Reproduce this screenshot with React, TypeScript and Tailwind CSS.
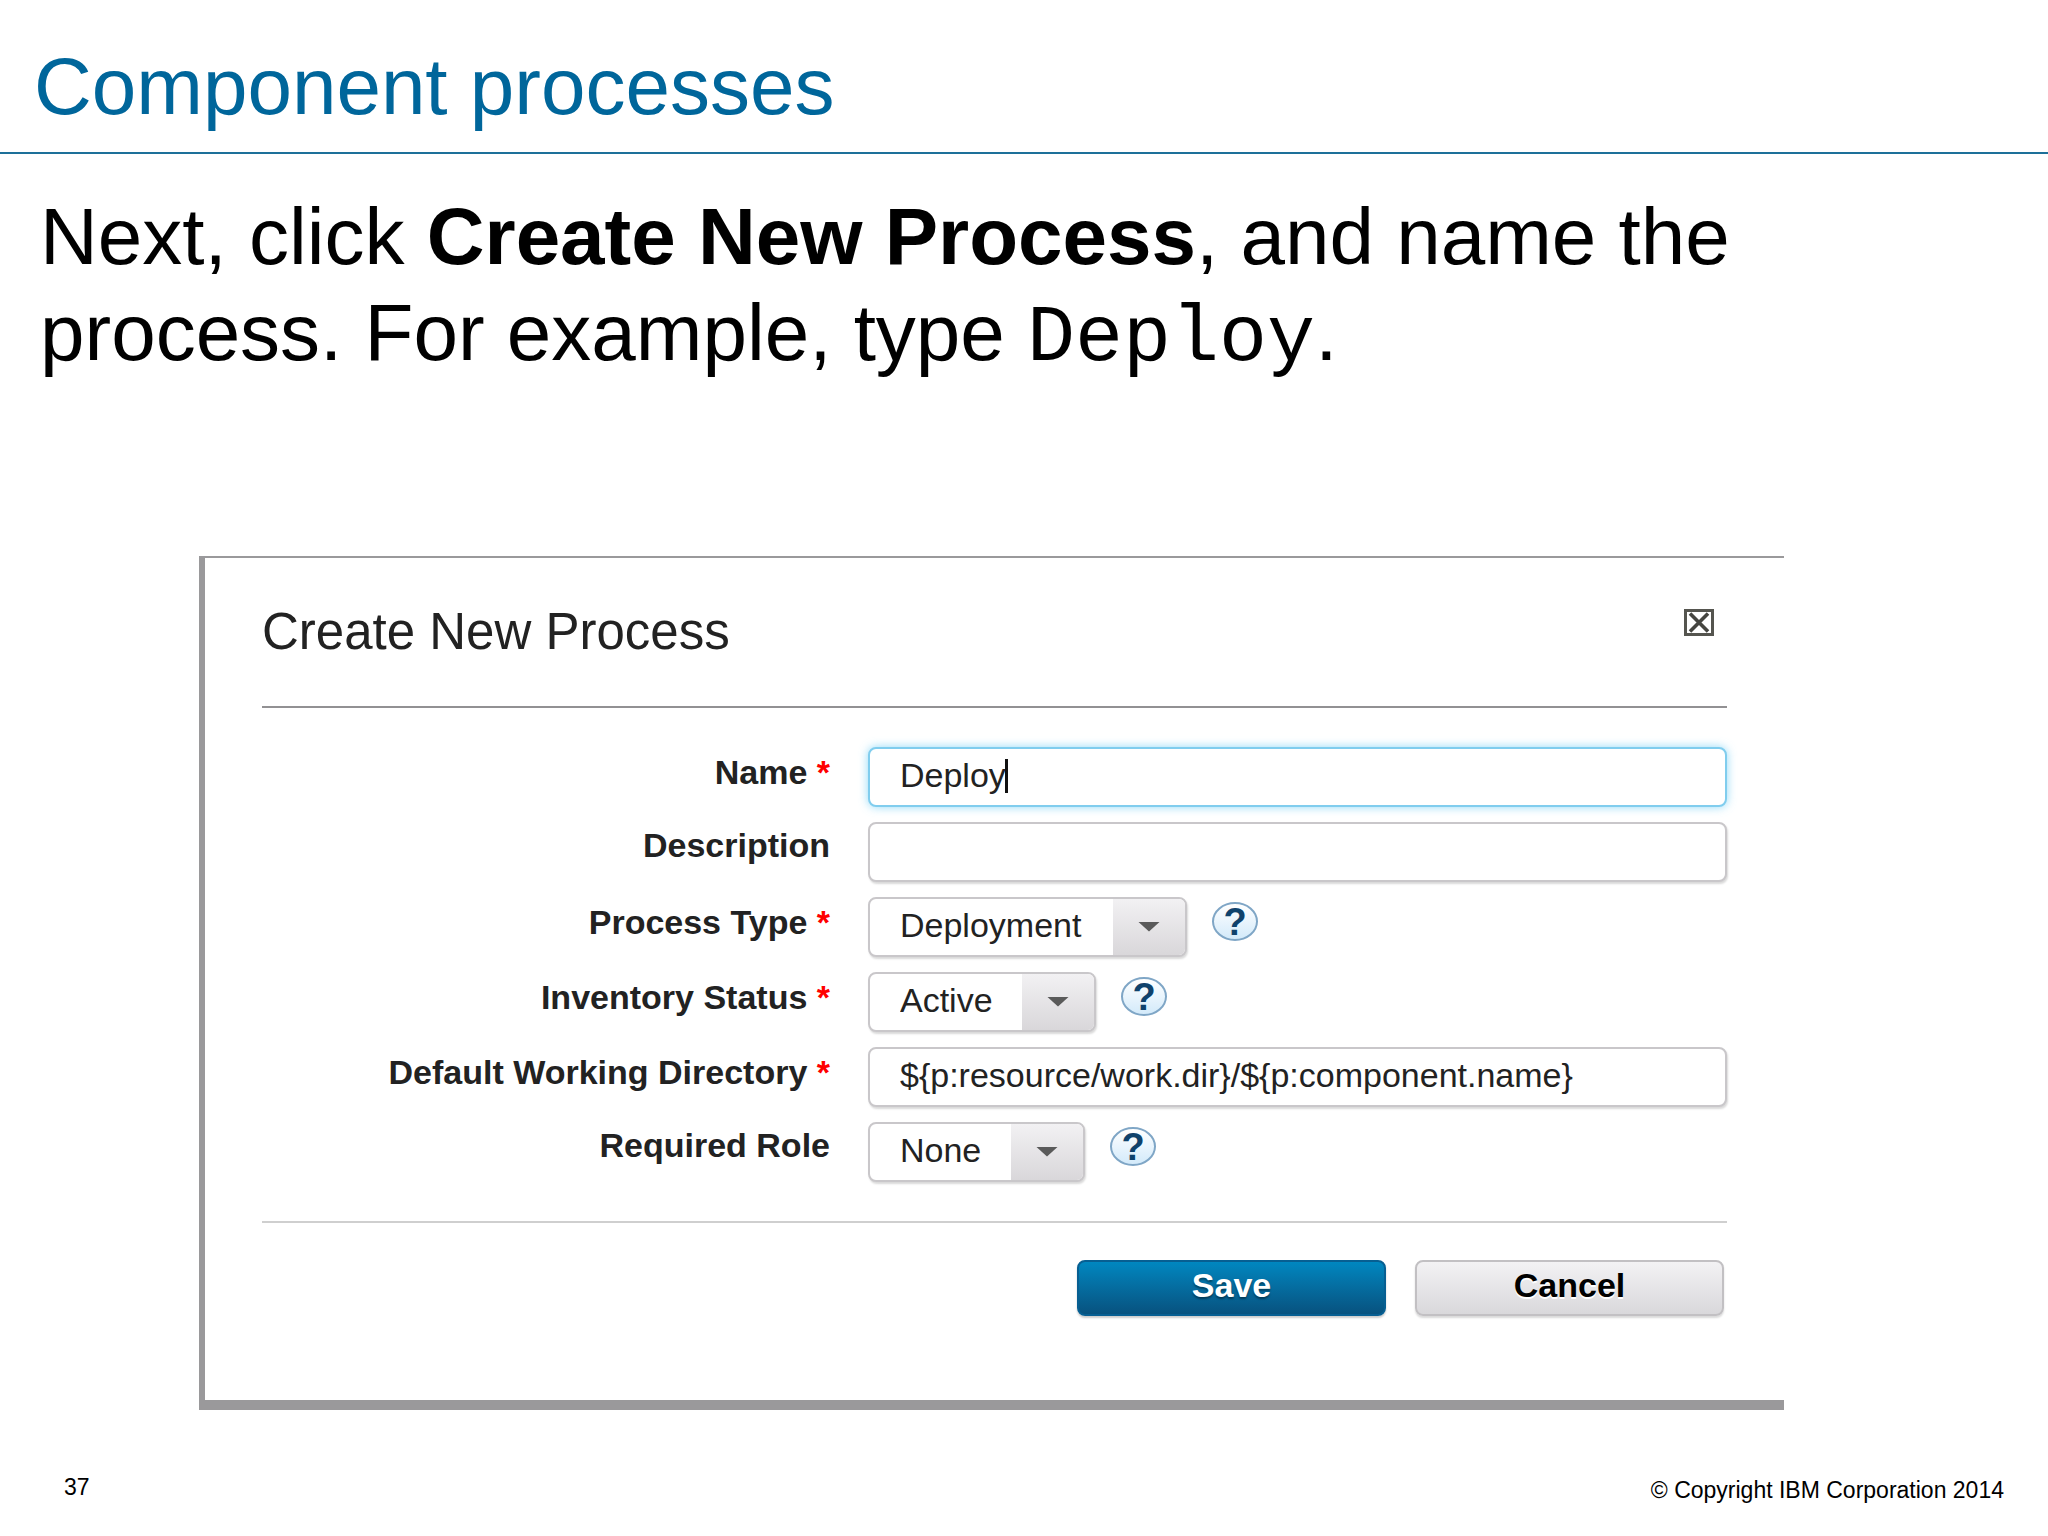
import { useState } from "react";
import type { ReactNode } from "react";

const fieldBase =
  "h-[60px] rounded-lg border-2 bg-white pb-1 pl-[30px] text-[34px] text-[#222] outline-none";
const fieldIdle =
  "border-[#c9c7ca] shadow-[1px_2px_2px_rgba(0,0,0,0.15)]";

function Row({
  id,
  label,
  required,
  children,
}: {
  id: string;
  label: string;
  required?: boolean;
  children: ReactNode;
}) {
  return (
    <div className="flex items-start gap-[38px]">
      <label
        htmlFor={id}
        className={`w-[568px] shrink-0 text-right text-[34px] font-bold whitespace-nowrap text-[#222] ${
          required ? "leading-[50px]" : "leading-[46px]"
        }`}
      >
        {label}
        {required && <span className="text-[#f00]"> *</span>}
      </label>
      {children}
    </div>
  );
}

function Dropdown({
  id,
  options,
  width,
}: {
  id: string;
  options: string[];
  width: string;
}) {
  return (
    <div className="flex items-start gap-[25px]">
      <div className={`relative ${width}`}>
        <select
          id={id}
          className={`${fieldBase} ${fieldIdle} w-full appearance-none pr-[72px]`}
        >
          {options.map((o) => (
            <option key={o}>{o}</option>
          ))}
        </select>
        <span className="pointer-events-none absolute inset-y-0.5 right-0.5 flex w-[72px] items-center justify-center rounded-r-md bg-linear-to-b from-[#f2f1f3] to-[#d9d7da]">
          <svg width="22" height="10" viewBox="0 0 22 10" aria-hidden="true">
            <path d="M0.5 0H21.5L11 9.5Z" fill="#5a5a5a" />
          </svg>
        </span>
      </div>
      <button
        type="button"
        aria-label="Help"
        className="mt-[5px] flex h-[39px] w-[46px] items-center justify-center rounded-[50%] border-2 border-[#7fa6c6] bg-linear-to-b from-white to-[#d3eafa] text-[38px] leading-[36px] font-bold text-[#0f426c]"
      >
        ?
      </button>
    </div>
  );
}

export default function App() {
  const [name, setName] = useState("Deploy");
  return (
    <div className="flex min-h-screen flex-col bg-white font-['Liberation_Sans',Arial,sans-serif] text-black">
      <header className="border-b-2 border-[#1d7099] px-[34px] pt-[39px] pb-[17px]">
        <h1 className="text-[80px] leading-[96px] text-[#00669b]">
          Component processes
        </h1>
      </header>

      <main>
        <p className="px-10 pt-[35px] text-[80px] leading-[96px]">
          Next, click <strong>Create New Process</strong>, and name the process.
          For example, type{" "}
          <code className="font-['Liberation_Mono',monospace] leading-none">
            Deploy
          </code>
          .
        </p>

        <section className="mt-[175px] mr-[264px] ml-[199px] border-t-2 border-b-10 border-l-6 border-[#9a999b] pt-[43px] pr-[57px] pb-[84px] pl-[57px]">
          <div className="flex items-start justify-between border-b-2 border-[#929193] pb-[43px]">
            <h2 className="text-[51px] leading-[62px] text-[#222]">
              Create New Process
            </h2>
            <button type="button" aria-label="Close" className="mt-2 mr-[13px]">
              <svg width="30" height="27" viewBox="0 0 30 27" aria-hidden="true">
                <rect x="1.5" y="1.5" width="27" height="24" fill="#fff" stroke="#55554f" strokeWidth="3" />
                <path d="M6 4.5L24 22.5M24 4.5L6 22.5" stroke="#454540" strokeWidth="3.6" />
              </svg>
            </button>
          </div>

          <form onSubmit={(e) => e.preventDefault()}>
            <div className="flex flex-col gap-[15px] pt-[39px] pb-[39px]">
              <Row id="name" label="Name" required>
                <div className="relative flex-1">
                  <input
                    id="name"
                    value={name}
                    onChange={(e) => setName(e.target.value)}
                    className={`${fieldBase} w-full border-[#80cdee] caret-transparent shadow-[0_0_10px_rgba(110,205,245,0.75)]`}
                  />
                  <span className="pointer-events-none absolute top-3 left-[137px] h-[34px] w-[3px] bg-[#111]" />
                </div>
              </Row>
              <Row id="description" label="Description">
                <input id="description" className={`${fieldBase} ${fieldIdle} min-w-0 flex-1`} />
              </Row>
              <Row id="type" label="Process Type" required>
                <Dropdown id="type" width="w-[319px]" options={["Deployment"]} />
              </Row>
              <Row id="status" label="Inventory Status" required>
                <Dropdown id="status" width="w-[228px]" options={["Active"]} />
              </Row>
              <Row id="directory" label="Default Working Directory" required>
                <input
                  id="directory"
                  defaultValue="${p:resource/work.dir}/${p:component.name}"
                  className={`${fieldBase} ${fieldIdle} min-w-0 flex-1`}
                />
              </Row>
              <Row id="role" label="Required Role">
                <Dropdown id="role" width="w-[217px]" options={["None"]} />
              </Row>
            </div>

            <div className="flex justify-end gap-[29px] border-t-2 border-[#cfcfcf] pt-[37px] pr-[3px]">
              <button
                type="submit"
                className="h-14 w-[309px] rounded-lg border-2 border-[#075f92] bg-linear-to-b from-[#0087c0] to-[#07527f] pb-1.5 text-[34px] leading-[46px] font-bold text-white shadow-[0_2px_2px_rgba(0,0,0,0.2)] [text-shadow:0_2px_2px_rgba(0,0,0,0.4)]"
              >
                Save
              </button>
              <button
                type="button"
                className="h-14 w-[309px] rounded-lg border-2 border-[#c2c0c3] bg-linear-to-b from-[#f3f2f4] to-[#d9d8db] pb-1.5 text-[34px] leading-[46px] font-bold text-black shadow-[0_2px_2px_rgba(0,0,0,0.15)] [text-shadow:0_2px_0_#fff]"
              >
                Cancel
              </button>
            </div>
          </form>
        </section>
      </main>

      <footer className="flex items-start justify-between pt-[61px] pr-11 pl-16 text-[23px] leading-[32px]">
        <span>37</span>
        <span className="pt-[3px]">© Copyright IBM Corporation 2014</span>
      </footer>
    </div>
  );
}
